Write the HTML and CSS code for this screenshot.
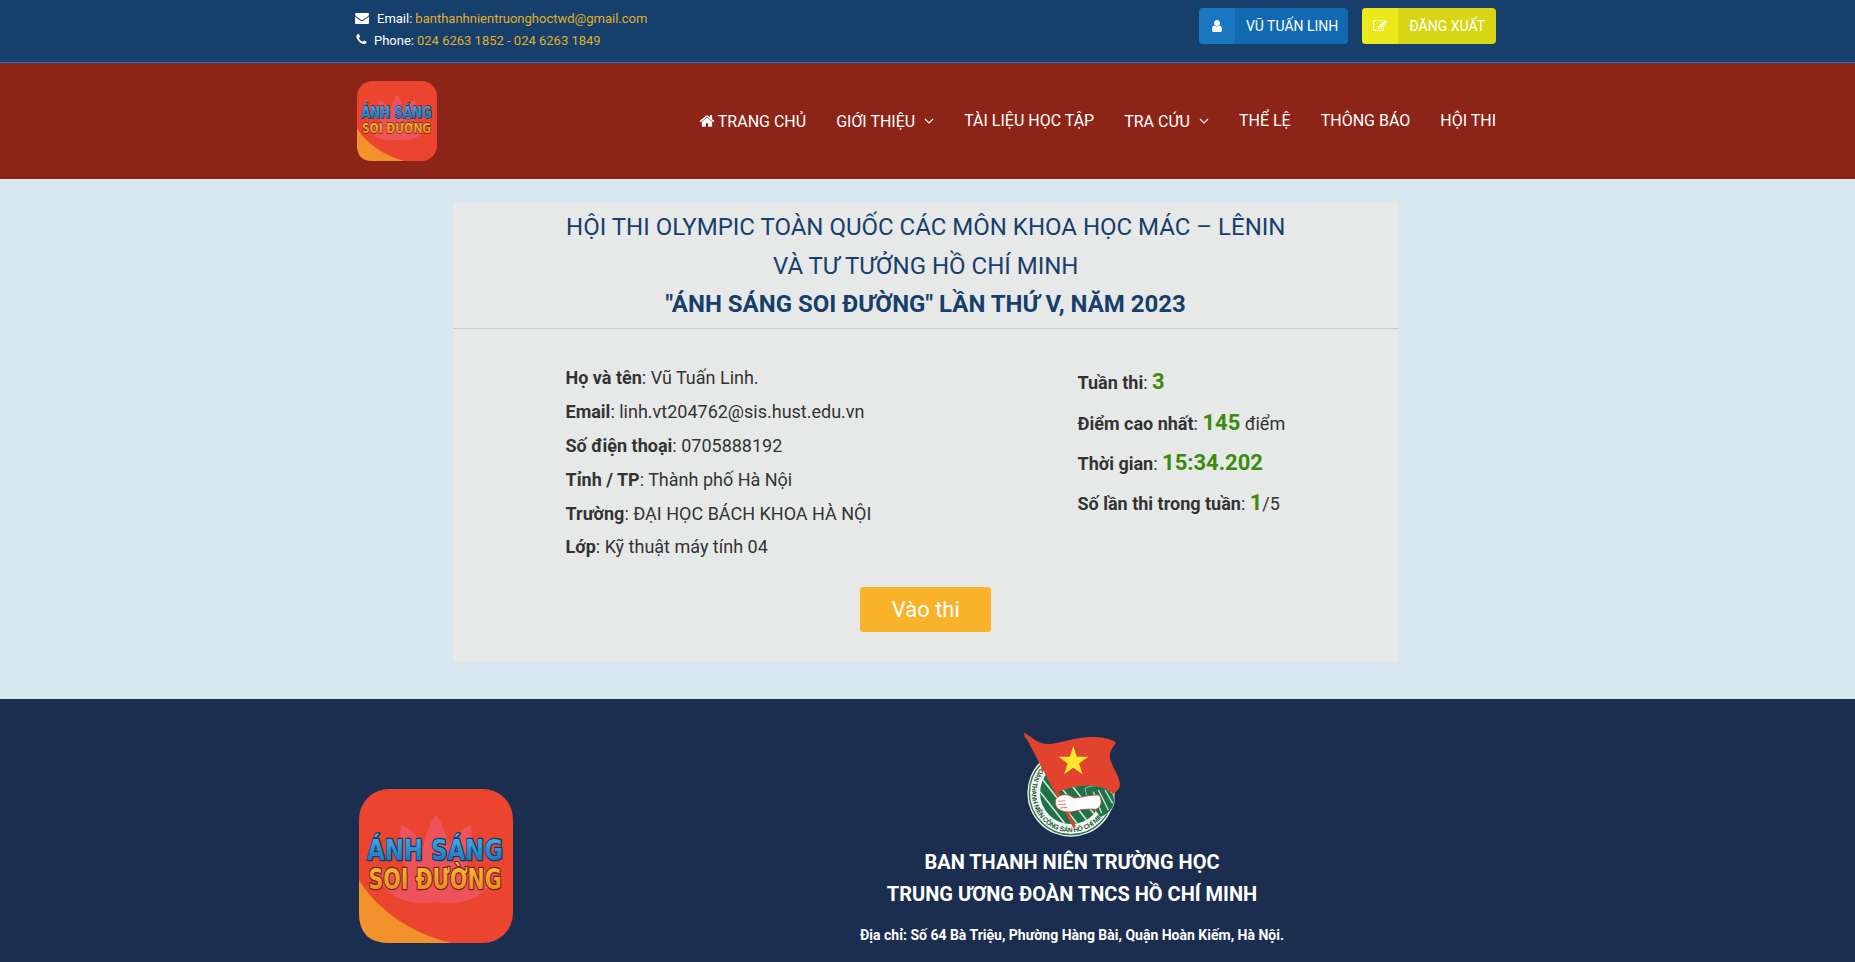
FILE: index.html
```html
<!DOCTYPE html>
<html lang="vi">
<head>
<meta charset="utf-8">
<title>Ánh Sáng Soi Đường</title>
<link rel="stylesheet" href="styles.css">
</head>
<body>
<svg class="defs" width="0" height="0" aria-hidden="true">
  <defs>
    <symbol id="i-home" viewBox="0 0 1792 1792"><path d="M1472 992v480q0 26-19 45t-45 19h-384v-384h-256v384h-384q-26 0-45-19t-19-45v-480q0-1 .5-3t.5-3l575-474 575 474q1 2 1 6zm223-69l-62 74q-8 9-21 11h-3q-13 0-21-7l-692-577-692 577q-12 8-24 7-13-2-21-11l-62-74q-8-10-7-23.500t11-21.500l719-599q32-26 76-26t76 26l244 204v-195q0-14 9-23t23-9h192q14 0 23 9t9 23v408l219 182q10 8 11 21.500t-7 23.500z"/></symbol>
    <symbol id="i-mail" viewBox="0 0 1792 1792"><path d="M1792 710v794q0 66-47 113t-113 47h-1472q-66 0-113-47t-47-113v-794q44 49 101 87 362 246 497 345 57 42 92.500 65.500t94.500 48 110 24.500h2q51 0 110-24.500t94.500-48 92.500-65.500q170-123 498-345 57-39 100-87zm0-294q0 79-49 151t-122 123q-376 261-468 325-10 7-42.500 30.500t-54 38-52 32.500-57.500 27-50 9h-2q-23 0-50-9t-57.500-27-52-32.500-54-38-42.500-30.500q-91-64-262-182.500t-205-142.500q-62-42-117-115.500t-55-136.500q0-78 41.500-130t118.500-52h1472q65 0 112.500 47t47.500 113z"/></symbol>
    <symbol id="i-phone" viewBox="0 0 1792 1792"><path d="M1600 1240q0 27-10 70.500t-21 68.500q-21 50-122 106-94 51-186 51-27 0-53-3.500t-57.500-12.500-47-14.500-55.500-20.500-49-18q-98-35-175-83-127-79-264-216t-216-264q-48-77-83-175-3-9-18-49t-20.500-55.500-14.500-47-12.500-57.500-3.500-53q0-92 51-186 56-101 106-122 25-11 68.500-21t70.500-10q14 0 21 3 18 6 53 76 11 19 30 54t35 63.500 31 53.500q3 4 17.500 25t21.500 35.500 7 28.500q0 20-28.500 50t-62 55-62 53-28.500 46q0 9 5 22.500t8.500 20.500 14 24 11.500 19q76 137 174 235t235 174q2 1 19 11.500t24 14 20.500 8.500 22.500 5q18 0 46-28.500t53-62 55-62 50-28.500q14 0 28.500 7t35.500 21.500 25 17.500q25 15 53.500 31t63.500 35 54 30q70 35 76 53 3 7 3 21z"/></symbol>
    <symbol id="i-user" viewBox="0 0 1792 1792"><path d="M1536 1399q0 109-62.500 187t-150.500 78h-854q-88 0-150.500-78t-62.500-187q0-85 8.500-160.500t31.500-152 58.500-131 94-89 134.500-34.500q131 128 313 128t313-128q76 0 134.500 34.500t94 89 58.500 131 31.500 152 8.500 160.500zm-256-887q0 159-112.500 271.500t-271.500 112.500-271.500-112.500-112.500-271.500 112.500-271.500 271.500-112.500 271.500 112.500 112.500 271.500z"/></symbol>
    <symbol id="i-edit" viewBox="0 0 1792 1792"><path d="M888 1184l116-116-152-152-116 116v56h96v96h56zm440-720q-16-16-33 1l-350 350q-17 17-1 33t33-1l350-350q17-17 1-33zm80 594v190q0 119-84.500 203.500t-203.500 84.500h-832q-119 0-203.500-84.500t-84.500-203.500v-832q0-119 84.500-203.500t203.500-84.500h832q63 0 117 25 15 7 18 23 3 17-9 29l-49 49q-14 14-32 8-23-6-45-6h-832q-66 0-113 47t-47 113v832q0 66 47 113t113 47h832q66 0 113-47t47-113v-126q0-13 9-22l64-64q15-15 35-7t20 29zm-96-738l288 288-672 672h-288v-288zm444 132l-92 92-288-288 92-92q28-28 68-28t68 28l152 152q28 28 28 68t-28 68z"/></symbol>
    <symbol id="i-chev" viewBox="0 0 10 10"><path d="M1 3l4 4 4-4" fill="none" stroke="currentColor" stroke-width="1.1"/></symbol>
    <linearGradient id="g-blue" x1="0" y1="0" x2="0" y2="1"><stop offset="0" stop-color="#4db4ea"/><stop offset="1" stop-color="#1668b2"/></linearGradient>
    <linearGradient id="g-gold" x1="0" y1="0" x2="0" y2="1"><stop offset="0" stop-color="#fbbf3a"/><stop offset="1" stop-color="#e8811d"/></linearGradient>
    <symbol id="logo" viewBox="0 0 154 154">
      <rect width="154" height="154" rx="30" fill="#ec452f"/>
      <path d="M0 91C20 124 58 146 92 154H30Q0 154 0 124Z" fill="#f3922c"/>
      <g fill="#ef5a70" opacity=".7">
        <path d="M77 26C94 48 96 90 77 113C58 90 60 48 77 26Z"/>
        <path d="M42 36C66 44 76 80 77 113C52 104 38 70 42 36Z"/>
        <path d="M112 36C88 44 78 80 77 113C102 104 116 70 112 36Z"/>
        <path d="M14 82C40 76 66 92 77 113C50 118 26 108 14 82Z"/>
        <path d="M140 82C114 76 88 92 77 113C104 118 128 108 140 82Z"/>
      </g>
      <text class="logo-t" x="76" y="71" font-size="29" fill="url(#g-blue)" stroke="#123a6a" text-anchor="middle" textLength="136" lengthAdjust="spacingAndGlyphs">ÁNH SÁNG</text>
      <text class="logo-t" x="76" y="100" font-size="28" fill="url(#g-gold)" stroke="#6e2412" text-anchor="middle" textLength="133" lengthAdjust="spacingAndGlyphs">SOI ĐƯỜNG</text>
    </symbol>
    <clipPath id="emblem-clip"><circle cx="213" cy="219" r="93"/></clipPath>
  </defs>
</svg>

<header class="topbar">
  <div class="wrap topbar-in">
    <div class="contact">
      <div class="contact-row"><svg class="ic-mail"><use href="#i-mail"/></svg><span class="lbl-mail">Email:</span> <a class="gold">banthanhnientruonghoctwd@gmail.com</a></div>
      <div class="contact-row"><svg class="ic-phone"><use href="#i-phone"/></svg><span class="lbl-phone">Phone:</span> <a class="gold">024 6263 1852 - 024 6263 1849</a></div>
    </div>
    <div class="actions">
      <a class="btn btn-blue"><span class="btn-ic"><svg><use href="#i-user"/></svg></span><span class="btn-t">VŨ TUẤN LINH</span></a>
      <a class="btn btn-yellow"><span class="btn-ic"><svg><use href="#i-edit"/></svg></span><span class="btn-t">ĐĂNG XUẤT</span></a>
    </div>
  </div>
</header>

<nav class="navbar">
  <div class="wrap nav-in">
    <svg class="nav-logo"><use href="#logo"/></svg>
    <ul class="menu">
      <li><svg class="ic-home"><use href="#i-home"/></svg>TRANG CHỦ</li>
      <li>GIỚI THIỆU<svg class="ic-chev"><use href="#i-chev"/></svg></li>
      <li class="up">TÀI LIỆU HỌC TẬP</li>
      <li>TRA CỨU<svg class="ic-chev"><use href="#i-chev"/></svg></li>
      <li class="up">THỂ LỆ</li>
      <li class="up">THÔNG BÁO</li>
      <li class="up">HỘI THI</li>
    </ul>
  </div>
</nav>

<main class="main">
  <section class="card">
    <div class="card-head">
      <h1 class="title first">HỘI THI OLYMPIC TOÀN QUỐC CÁC MÔN KHOA HỌC MÁC – LÊNIN</h1>
      <h1 class="title">VÀ TƯ TƯỞNG HỒ CHÍ MINH</h1>
      <h1 class="title strong">"ÁNH SÁNG SOI ĐƯỜNG" LẦN THỨ V, NĂM 2023</h1>
    </div>
    <div class="card-body">
      <div class="info">
        <div class="col-left">
          <p><b>Họ và tên</b>: Vũ Tuấn Linh.</p>
          <p><b>Email</b>: linh.vt204762@sis.hust.edu.vn</p>
          <p><b>Số điện thoại</b>: 0705888192</p>
          <p><b>Tỉnh / TP</b>: Thành phố Hà Nội</p>
          <p><b>Trường</b>: ĐẠI HỌC BÁCH KHOA HÀ NỘI</p>
          <p><b>Lớp</b>: Kỹ thuật máy tính 04</p>
        </div>
        <div class="col-right">
          <p class="r1"><b>Tuần thi</b>: <strong>3</strong></p>
          <p class="r2"><b>Điểm cao nhất</b>: <strong>145</strong> điểm</p>
          <p class="r3"><b>Thời gian</b>: <strong>15:34.202</strong></p>
          <p class="r4"><b>Số lần thi trong tuần</b>: <strong>1</strong>/5</p>
        </div>
      </div>
      <div class="cta"><a class="start">Vào thi</a></div>
    </div>
  </section>
</main>

<footer class="footer">
  <div class="wrap footer-in">
    <svg class="foot-logo"><use href="#logo"/></svg>
    <div class="foot-center">
      <svg class="emblem" viewBox="-9 0 450 378">
        <circle cx="213" cy="219" r="131" fill="#f4f6f2"/>
        <circle cx="213" cy="219" r="125" fill="none" stroke="#1e7248" stroke-width="4"/>
        <circle cx="213" cy="219" r="93" fill="#1e7248"/>
        <g clip-path="url(#emblem-clip)" stroke="#cfe3d4" stroke-width="5">
          <path d="M90 130L270 360M115 115L295 345M65 145L245 375M140 100L320 330"/>
        </g>
        <path id="emblem-arc" d="M130 135A118 118 0 1 0 327 250" fill="none"/>
        <text class="emblem-t" font-size="20"><textPath href="#emblem-arc" textLength="405">ĐOÀN THANH NIÊN CỘNG SẢN HỒ CHÍ MINH</textPath></text>
        <path d="M255 205C285 190 320 196 340 225C350 252 334 280 300 292L262 235Z" fill="#1e7248" stroke="#cfe3d4" stroke-width="2"/>
        <path d="M295 210L325 270M315 210L338 250M280 215L305 280" stroke="#cfe3d4" stroke-width="4" fill="none"/>
        <path d="M72 38L88 48C105 60 120 72 145 72C175 72 215 55 260 52C295 50 325 52 348 68C338 80 328 95 330 115C335 140 358 165 360 195C358 208 350 215 340 222C320 205 290 195 255 197C225 198 200 205 175 215L228 320L220 324L80 56L74 52Z" fill="#e2432e"/>
        <path d="M220 78L230.600 110.400L264.700 110.500L237.100 130.600L247.600 163L220 143L192.400 163L202.900 130.600L175.300 110.500L209.400 110.400Z" fill="#fde72c"/>
        <path d="M172 232C188 220 205 222 222 234C250 232 280 222 298 226C308 245 304 262 288 268C265 266 245 268 222 274C205 278 185 276 172 264C164 252 164 240 172 232Z" fill="#fff" stroke="#c8402c" stroke-width="2.500"/>
        <path d="M172 244L196 242M174 254L198 252M180 264L202 262" stroke="#c8402c" stroke-width="2" fill="none"/>
      </svg>
      <h2 class="org">BAN THANH NIÊN TRƯỜNG HỌC</h2>
      <h2 class="org">TRUNG ƯƠNG ĐOÀN TNCS HỒ CHÍ MINH</h2>
      <p class="addr">Địa chỉ: Số 64 Bà Triệu, Phường Hàng Bài, Quận Hoàn Kiếm, Hà Nội.</p>
    </div>
  </div>
</footer>
</body>
</html>
```
FILE: styles.css
```css
* { box-sizing: border-box; }
html, body { margin: 0; padding: 0; }
body {
  width: 1855px;
  height: 962px;
  overflow: hidden;
  font-family: Roboto, "Liberation Sans", sans-serif;
  color: #333;
  background: #d7e7f0;
}
.defs { position: absolute; }
.wrap { width: 1140px; margin-left: 356px; }

.topbar { height: 63px; background: #173f6b; border-bottom: 1px solid #1b78c0; }
.topbar-in { display: flex; justify-content: space-between; align-items: flex-start; }
.contact { padding-top: 7px; font-size: 13px; color: #fff; }
.contact-row { display: flex; align-items: center; height: 22px; }
.ic-mail { width: 14px; height: 14px; fill: #fff; margin-right: 8px; margin-left: -1px; }
.ic-phone { width: 13px; height: 13px; fill: #fff; margin-right: 6px; margin-left: -1px; margin-top: -2px; }
.lbl-mail, .lbl-phone { margin-right: 3px; }
.gold { color: #e0b02a; }
.actions { display: flex; gap: 14px; padding-top: 8px; }
.btn { display: flex; height: 36px; border-radius: 4px; overflow: hidden; color: #fff; font-size: 14px; }
.btn-ic { width: 36px; display: flex; align-items: center; justify-content: center; }
.btn-ic svg { width: 14px; height: 14px; fill: #fff; }
.btn-t { display: flex; align-items: center; padding: 0 10px 0 11px; }
.btn-blue { background: #1169b2; }
.btn-blue .btn-ic { background: #1b78c0; }
.btn-yellow { background: #d6d614; }
.btn-yellow .btn-ic { background: #ebe919; }
.btn-yellow .btn-t { padding-right: 11px; }

.navbar { height: 116px; background: #8c2518; }
.nav-in { display: flex; justify-content: space-between; align-items: flex-start; }
.nav-logo { width: 80px; height: 80px; margin: 18px 0 0 1px; }
.menu { display: flex; gap: 30px; list-style: none; margin: 0; padding: 47px 0 0; font-size: 16px; color: #fff; }
.menu li { display: flex; align-items: center; height: 22px; white-space: nowrap; }
.menu li.up { margin-top: -1px; }
.ic-home { width: 16px; height: 16px; fill: #fff; margin-right: 3px; }
.ic-chev { width: 10px; height: 10px; margin-left: 9px; }

.main { height: 520px; padding-top: 24px; }
.card { width: 945.500px; height: 459px; margin-left: 453px; background: #e7e9e9; border-radius: 3px; }
.card-head { height: 126px; padding-top: 5px; border-bottom: 1px solid #c6c9c9; }
.title { margin: 0; height: 38px; line-height: 38px; font-size: 24px; font-weight: 400; color: #173f6b; text-align: center; }
.title.first { height: 39px; }
.title.strong { font-weight: 700; }
.card-body { padding: 32px 0 0 112.500px; }
.info { display: flex; height: 226px; font-size: 18px; }
.col-left { width: 512px; }
.col-left p { margin: 0; height: 33.900px; line-height: 34px; }
.col-right { position: relative; }
.col-right p { margin: 0; line-height: 34px; }
.col-right b, .col-left b { font-weight: 700; }
.col-right strong { font-size: 22px; font-weight: 700; color: #3c8a0e; }
.r1 { margin-top: 4px !important; height: 41px; }
.r2 { height: 40px; }
.r3 { height: 40px; }
.r4 { height: 40px; }
.cta { display: flex; justify-content: center; margin-left: -112.500px; }
.start { display: block; width: 131px; height: 45px; line-height: 45px; text-align: center; font-size: 22px; color: #fff; background: #f8b32b; border-radius: 3px; }

.footer { height: 263px; background: #1c2e50; color: #fff; }
.footer-in { display: flex; align-items: flex-start; }
.foot-logo { width: 154px; height: 154px; margin: 90px 0 0 3px; flex: none; }
.foot-center { width: 600px; margin-left: 259px; margin-top: 21px; display: flex; flex-direction: column; align-items: center; text-align: center; }
.emblem { width: 150px; height: 126px; }
.org { margin: 0; height: 32px; line-height: 32px; font-size: 20px; font-weight: 700; }
.addr { margin: 17px 0 0; font-size: 14px; font-weight: 700; }
.emblem-t { fill: #1c5c38; font-family: "Liberation Sans", sans-serif; font-weight: 700; }
.logo-t { font-family: "DejaVu Sans", sans-serif; font-weight: 700; stroke-width: 2.600; paint-order: stroke; stroke-linejoin: round; }
```
